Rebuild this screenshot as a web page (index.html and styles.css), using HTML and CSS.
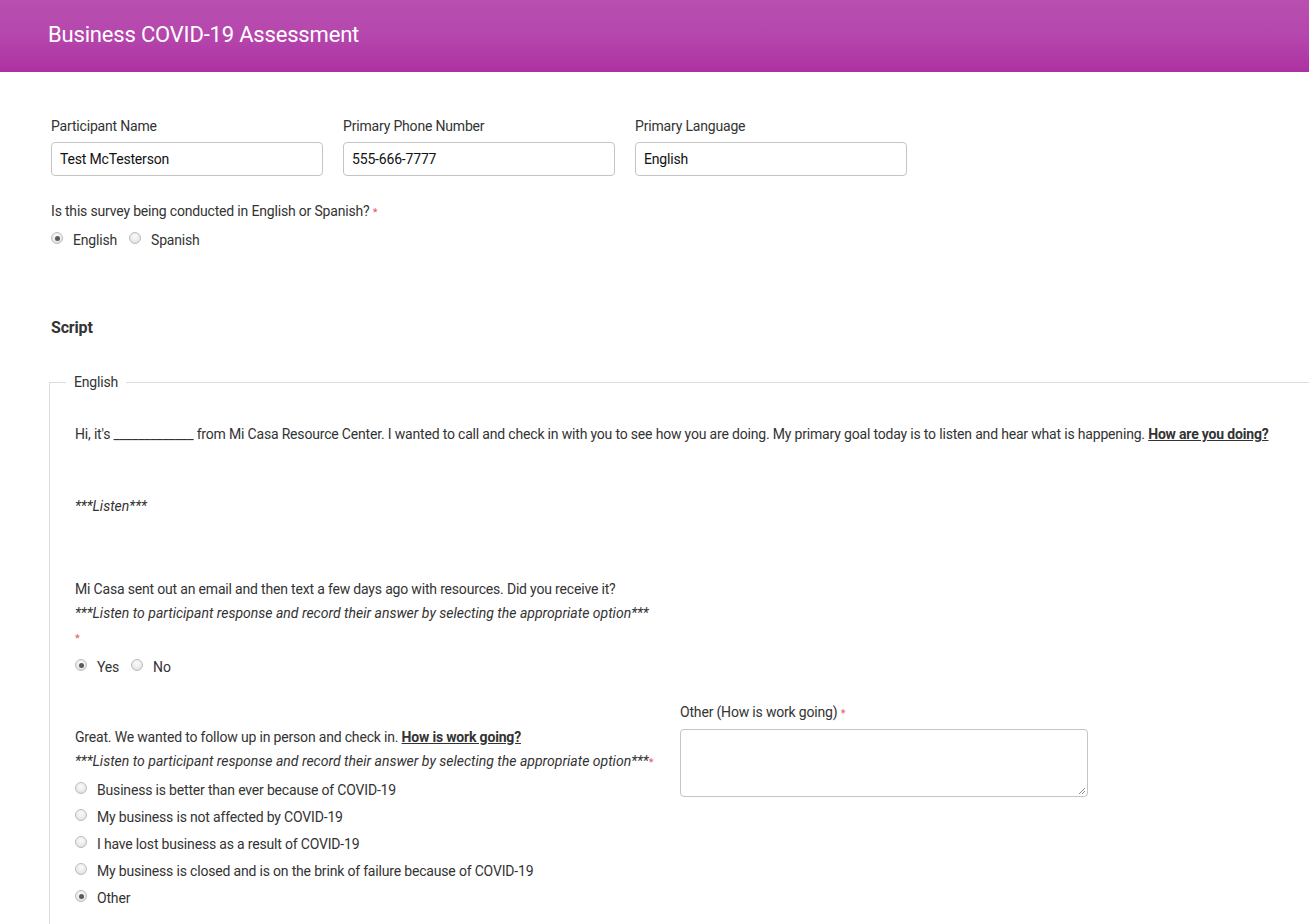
FILE: index.html
```html
<!DOCTYPE html>
<html lang="en">
<head>
<meta charset="utf-8">
<title>Business COVID-19 Assessment</title>
<link rel="stylesheet" href="styles.css">
</head>
<body>
<header class="topbar">
  <h1 class="title">Business COVID-19 Assessment</h1>
</header>
<main class="page">
  <div class="fields">
    <div class="field">
      <label class="label">Participant Name</label>
      <div class="input">Test McTesterson</div>
    </div>
    <div class="field">
      <label class="label">Primary Phone Number</label>
      <div class="input">555-666-7777</div>
    </div>
    <div class="field">
      <label class="label">Primary Language</label>
      <div class="input">English</div>
    </div>
  </div>

  <div class="question q-lang">
    <div class="qtext">Is this survey being conducted in English or Spanish? <span class="req">*</span></div>
    <div class="radios inline">
      <span class="opt"><span class="radio checked"></span>English</span>
      <span class="opt"><span class="radio"></span>Spanish</span>
    </div>
  </div>

  <h2 class="section">Script</h2>

  <fieldset class="box">
    <legend class="legend">English</legend>
    <p class="line greet">Hi, it's _____________ from Mi Casa Resource Center. I wanted to call and check in with you to see how you are doing. My primary goal today is to listen and hear what is happening. <strong class="ask">How are you doing?</strong></p>
    <p class="line note listen">***Listen***</p>

    <div class="question q-recv">
      <div class="line">Mi Casa sent out an email and then text a few days ago with resources. Did you receive it?</div>
      <div class="line note">***Listen to participant response and record their answer by selecting the appropriate option***</div>
      <div class="line"><span class="req">*</span></div>
      <div class="radios inline yn">
        <span class="opt"><span class="radio checked"></span>Yes</span>
        <span class="opt"><span class="radio"></span>No</span>
      </div>
    </div>

    <div class="cols">
      <div class="col-left">
        <div class="line">Great. We wanted to follow up in person and check in. <strong class="ask">How is work going?</strong></div>
        <div class="line note">***Listen to participant response and record their answer by selecting the appropriate option***<span class="req">*</span></div>
        <div class="radios stack">
          <span class="opt"><span class="radio"></span>Business is better than ever because of COVID-19</span>
          <span class="opt"><span class="radio"></span>My business is not affected by COVID-19</span>
          <span class="opt"><span class="radio"></span>I have lost business as a result of COVID-19</span>
          <span class="opt"><span class="radio"></span>My business is closed and is on the brink of failure because of COVID-19</span>
          <span class="opt"><span class="radio checked"></span>Other</span>
        </div>
      </div>
      <div class="col-right">
        <label class="label">Other (How is work going) <span class="req">*</span></label>
        <div class="textarea">
          <svg class="grip" width="9" height="9" viewBox="0 0 9 9"><path d="M8 2 L2 8 M8 5 L5 8" stroke="#888" stroke-width="1" fill="none"/></svg>
        </div>
      </div>
    </div>
  </fieldset>
</main>
</body>
</html>
```

FILE: styles.css
```css
html, body {
  margin: 0;
  padding: 0;
  overflow-x: hidden;
}
body {
  font-family: Roboto, "Liberation Sans", Arial, sans-serif;
  font-size: 14px;
  letter-spacing: -0.18px;
  color: #333;
  background: #fff;
}
.topbar {
  height: 72px;
  background: linear-gradient(to bottom, #b94fb1 0%, #b546ad 50%, #ad31a1 100%);
  display: flex;
  align-items: center;
  padding-left: 48px;
}
.title {
  margin: 0 0 4px 0;
  font-size: 22px;
  font-weight: 400;
  color: #fff;
}
.page {
  padding-left: 51px;
}
.fields {
  display: flex;
  gap: 20px;
  margin-top: 46px;
}
.field {
  width: 272px;
  display: flex;
  flex-direction: column;
}
.label {
  display: block;
  line-height: 17px;
  margin-bottom: 7px;
  color: #333;
}
.input {
  box-sizing: border-box;
  height: 34px;
  border: 1px solid #c4c4c4;
  border-radius: 4px;
  padding: 0 8px;
  display: flex;
  align-items: center;
  color: #111;
}
.req {
  color: #e65a5a;
  font-size: 11px;
  font-style: normal;
}
.q-lang {
  margin-top: 27px;
}
.qtext {
  line-height: 17px;
}
.radios.inline {
  display: flex;
  gap: 12px;
}
.q-lang .radios {
  margin-top: 7px;
}
.opt {
  display: inline-flex;
  align-items: flex-start;
  line-height: 24px;
}
.radio {
  box-sizing: border-box;
  width: 12px;
  height: 12px;
  border-radius: 50%;
  border: 1px solid #bdbdbd;
  background: radial-gradient(circle at 50% 35%, #fbfbfb 0%, #e9e9e9 60%, #d3d3d3 100%);
  margin-top: 4px;
  margin-right: 10px;
  flex: none;
  display: flex;
  align-items: center;
  justify-content: center;
}
.radio.checked::after {
  content: "";
  width: 5px;
  height: 5px;
  border-radius: 50%;
  background: #5a5a5a;
}
.section {
  margin: 66px 0 0 0;
  font-size: 16px;
  line-height: 20px;
  font-weight: 700;
  color: #333;
}
.box {
  margin: 36px -20px 0 -2px;
  padding: 0 0 30px 25px;
  border: 1px solid #dcdcdc;
  border-right: none;
  border-bottom: none;
}
.legend {
  margin-left: -9px;
  padding: 0 8px;
  line-height: 17px;
  color: #333;
}
.line {
  line-height: 24px;
  margin: 0;
}
.greet {
  margin-top: 31px;
}
.ask {
  font-weight: 700;
  text-decoration: underline;
}
.note {
  font-style: italic;
  letter-spacing: 0;
}
.listen {
  margin-top: 48px;
}
.q-recv {
  margin-top: 59px;
}
.yn {
  margin-top: 4px;
}
.cols {
  display: flex;
  gap: 0;
  margin-top: 25px;
}
.col-left {
  width: 605px;
  padding-top: 21px;
}
.stack {
  display: flex;
  flex-direction: column;
  gap: 3px;
  margin-top: 3px;
}
.col-right {
  width: 408px;
}
.col-right .label {
  margin-bottom: 7px;
}
.textarea {
  box-sizing: border-box;
  height: 68px;
  border: 1px solid #c4c4c4;
  border-radius: 4px;
  position: relative;
}
.grip {
  position: absolute;
  right: 1px;
  bottom: 1px;
}
```
